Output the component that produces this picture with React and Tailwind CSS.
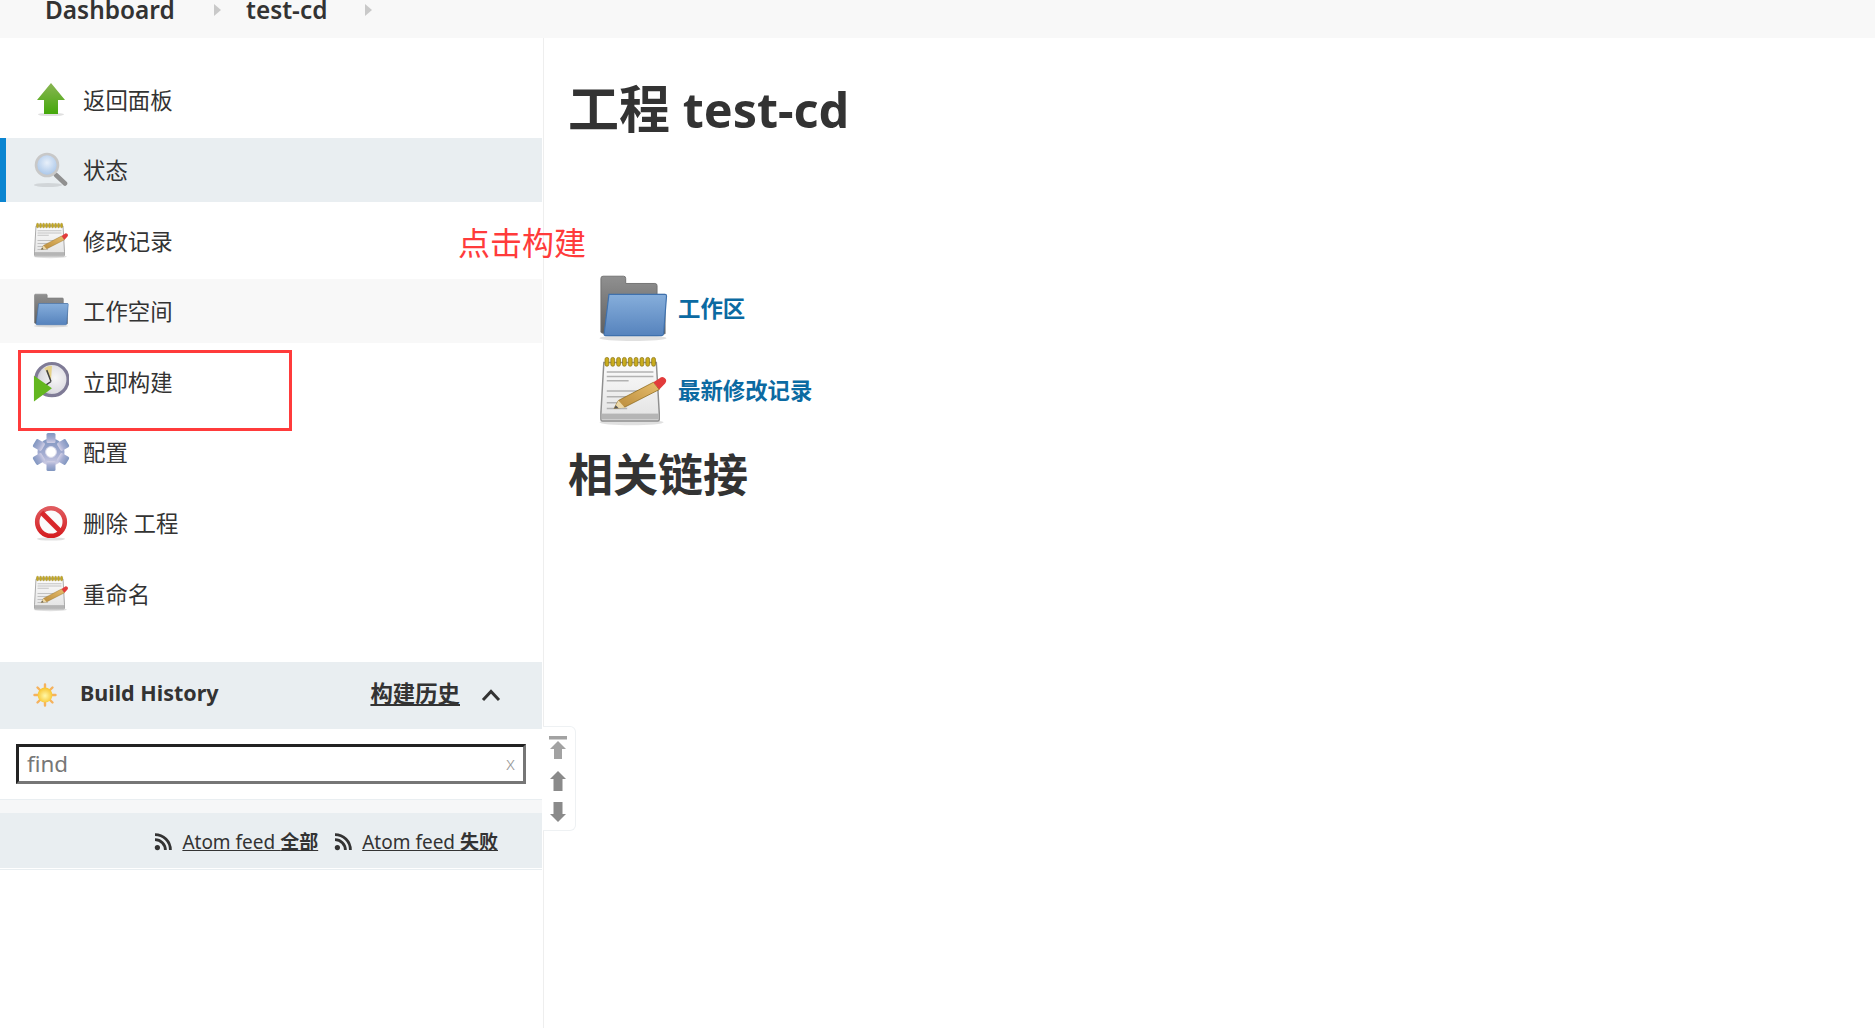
import React from "react";

const Notepad = ({ className, id = "a" }) => (
  <svg viewBox="0 0 48 48" className={className}>
    <defs>
      <linearGradient id={`padg${id}`} x1="0" y1="0" x2="0" y2="1"><stop offset="0" stopColor="#fbfbfb" /><stop offset="1" stopColor="#e2e2e2" /></linearGradient>
      <linearGradient id={`pencilg${id}`} x1="0" y1="1" x2="1" y2="0"><stop offset="0" stopColor="#b98a3a" /><stop offset="1" stopColor="#e6bd6c" /></linearGradient>
    </defs>
    <ellipse cx="23" cy="45.5" rx="22" ry="2" fill="#000" opacity="0.12" />
    <path d="M4 4.5h36l2 34.5v4.5a1 1 0 0 1-1 1H3a1 1 0 0 1-1-1V39z" fill={`url(#padg${id})`} stroke="#8f8f8f" strokeWidth="1" />
    <rect x="2.5" y="39.5" width="39" height="4" fill="#b5b5b5" />
    {[6, 10, 14, 18, 22, 26, 30, 34, 38].map((x) => (
      <rect key={x} x={x - 1.2} y="1" width="2.6" height="6" rx="1.2" fill="#c9ac1e" stroke="#8a7414" strokeWidth="0.5" />
    ))}
    <path d="M6 11h32M6 14h32M6 17h15M6 24h32M6 28h24M6 32h17M6 36h14" fill="none" stroke="#b2b2b2" strokeWidth="1" />
    <path d="M11 36l3-5.5 24-12.5 4 5-23.5 12z" fill={`url(#pencilg${id})`} stroke="#8a6414" strokeWidth="0.5" />
    <path d="M38 18l4-2.6a2.6 2.6 0 0 1 4 3.4l-4 4.2z" fill="#e23b3b" />
    <path d="M11 36l3-5.5 4.5 5z" fill="#ecd8a8" />
    <path d="M11 36l1.2-2.2 2 2z" fill="#555" />
  </svg>
);

const Folder = ({ className, id = "a" }) => (
  <svg viewBox="0 0 48 48" className={className}>
    <defs>
      <linearGradient id={`foldb${id}`} x1="0" y1="0" x2="0" y2="1"><stop offset="0" stopColor="#86aedb" /><stop offset="1" stopColor="#5683bd" /></linearGradient>
      <linearGradient id={`foldg${id}`} x1="0" y1="0" x2="0" y2="1"><stop offset="0" stopColor="#909090" /><stop offset="1" stopColor="#5f5f5f" /></linearGradient>
    </defs>
    <ellipse cx="24" cy="44" rx="23" ry="2" fill="#000" opacity="0.12" />
    <path d="M2 3a1.5 1.5 0 0 1 1.5-1.5h14a1.5 1.5 0 0 1 1.5 1.5v3.5h20a1.5 1.5 0 0 1 1.5 1.5v6H46v27H4l-2-1z" fill={`url(#foldg${id})`} stroke="#6b6b6b" strokeWidth="0.6" />
    <path d="M7.5 14h38.5a1 1 0 0 1 1 1l-2 26a1.5 1.5 0 0 1-1.5 1.3H5.2a1 1 0 0 1-1-1.2z" fill={`url(#foldb${id})`} stroke="#3f71ad" strokeWidth="0.8" />
  </svg>
);

const UpArrow = ({ className }) => (
  <svg viewBox="0 0 36 36" className={className}>
    <defs><linearGradient id="upg" x1="0" y1="0" x2="0" y2="1"><stop offset="0" stopColor="#8ab554" /><stop offset="1" stopColor="#44a80a" /></linearGradient></defs>
    <ellipse cx="18" cy="33" rx="13" ry="1.6" fill="#000" opacity="0.12" />
    <path d="M18 1.5L32 18.5H25V32.5H11V18.5H4z" fill="url(#upg)" />
  </svg>
);

const Magnifier = ({ className }) => (
  <svg viewBox="0 0 36 36" className={className}>
    <defs><radialGradient id="mag" cx="0.5" cy="0.4" r="0.6"><stop offset="0" stopColor="#e8f0fa" /><stop offset="1" stopColor="#a6c4e8" /></radialGradient></defs>
    <ellipse cx="15" cy="33" rx="14" ry="2" fill="#000" opacity="0.1" />
    <path d="M23 23l9 8.5" stroke="#909090" strokeWidth="4.6" strokeLinecap="round" />
    <circle cx="14" cy="13" r="11" fill="url(#mag)" stroke="#c8c8c8" strokeWidth="2.6" />
  </svg>
);

const Clock = ({ className }) => (
  <svg viewBox="0 0 38 42" className={className}>
    <defs><radialGradient id="clk" cx="0.6" cy="0.45" r="0.65"><stop offset="0" stopColor="#f7f7f7" /><stop offset="0.7" stopColor="#dddce2" /><stop offset="1" stopColor="#a8a5b8" /></radialGradient></defs>
    <circle cx="20" cy="19" r="17" fill="url(#clk)" stroke="#7f7b96" strokeWidth="3.4" />
    <path d="M19 20L12 7a14 14 0 0 1 8-2.5z" fill="#e6d28a" />
    <path d="M19 21L14.5 9M19 21l-7 5" stroke="#444" strokeWidth="1.6" />
    <path d="M1 15L20 28 1 42z" fill="#63b71f" />
  </svg>
);

const Gear = ({ className }) => (
  <svg viewBox="0 0 38 40" className={className}>
    <defs><linearGradient id="gearg" x1="0" y1="0" x2="0" y2="1"><stop offset="0" stopColor="#8096c0" /><stop offset="0.6" stopColor="#a6aed2" /><stop offset="1" stopColor="#d2d0e6" /></linearGradient></defs>
    <g fill="url(#gearg)">
      <circle cx="19" cy="20" r="13.5" />
      {[0, 60, 120, 180, 240, 300].map((a) => (
        <rect key={a} x="14.5" y="1" width="9" height="10" rx="1.5" transform={`rotate(${a} 19 20)`} />
      ))}
    </g>
    <circle cx="19" cy="20" r="5.4" fill="#fff" stroke="#dcdcec" strokeWidth="1" />
  </svg>
);

const Stop = ({ className }) => (
  <svg viewBox="0 0 36 36" className={className}>
    <defs><linearGradient id="stopg" x1="0" y1="0" x2="0" y2="1"><stop offset="0" stopColor="#e05a5e" /><stop offset="1" stopColor="#d51f22" /></linearGradient></defs>
    <ellipse cx="18" cy="34" rx="14" ry="1.6" fill="#000" opacity="0.12" />
    <circle cx="18" cy="17" r="13.8" fill="#fbfbfb" stroke="url(#stopg)" strokeWidth="4.6" />
    <path d="M8.5 7.5l19 19" stroke="#d8262a" strokeWidth="5" />
  </svg>
);

const Sun = ({ className }) => (
  <svg viewBox="0 0 24 24" className={className}>
    <defs><radialGradient id="sun" cx="0.5" cy="0.55" r="0.5"><stop offset="0" stopColor="#fff8a8" /><stop offset="1" stopColor="#f8c838" /></radialGradient></defs>
    <g stroke="#f6b25c" strokeWidth="2.4" strokeLinecap="round">
      <path d="M12 1.5v4M12 18.5v4M1.5 12h4M18.5 12h4M4.5 4.5l3 3M16.5 16.5l3 3M19.5 4.5l-3 3M7.5 16.5l-3 3" />
    </g>
    <circle cx="12" cy="12" r="7.4" fill="url(#sun)" />
  </svg>
);

const Rss = ({ className }) => (
  <svg viewBox="0 0 18 18" className={className}>
    <circle cx="3.4" cy="14.6" r="2.6" fill="#333" />
    <path d="M1 6.6a10.4 10.4 0 0 1 10.4 10.4M1 1.6a15.4 15.4 0 0 1 15.4 15.4" fill="none" stroke="#333" strokeWidth="2.8" />
  </svg>
);

const ScrollTop = () => (
  <svg viewBox="0 0 18 24" className="w-[18px] h-[24px] block">
    <rect x="0" y="0" width="18" height="3.5" fill="#a2a2a2" />
    <path d="M9 5l8 8h-4v10H5V13H1z" fill="#a2a2a2" />
  </svg>
);
const ScrollUp = () => (
  <svg viewBox="0 0 18 20" className="w-[18px] h-[20px] block">
    <path d="M9 0l8 8h-3.5v12h-9V8H1z" fill="#8a8a8a" />
  </svg>
);
const ScrollDown = () => (
  <svg viewBox="0 0 18 20" className="w-[18px] h-[20px] block">
    <path d="M9 20l8-8h-3.5V0h-9v12H1z" fill="#8a8a8a" />
  </svg>
);

const items = [
  { t: "返回面板", I: UpArrow, c: "w-[36px] h-[37px]", b: "" },
  { t: "状态", I: Magnifier, c: "w-[36px] h-[36px]", b: "bg-[#e9eef1]", active: true },
  { t: "修改记录", I: Notepad, id: "s1", c: "w-[36px] h-[37px]", b: "" },
  { t: "工作空间", I: Folder, id: "s2", c: "w-[36px] h-[36px]", b: "bg-[#f8f8f8]" },
  { t: "立即构建", I: Clock, c: "w-[36px] h-[41px]", b: "" },
  { t: "配置", I: Gear, c: "w-[38px] h-[40px]", b: "" },
  { t: "删除 工程", I: Stop, c: "w-[36px] h-[36px]", b: "" },
  { t: "重命名", I: Notepad, id: "s3", c: "w-[36px] h-[37px]", b: "" },
];

const font = "font-['Noto_Sans','Noto_Sans_CJK_SC',sans-serif]";

export default function App() {
  return (
    <div className={`relative h-screen w-full overflow-hidden bg-white text-[#333] ${font}`}>
      <header className="h-[38px] bg-[#f8f8f8] overflow-hidden flex items-start pl-[45px]">
        <div className="flex items-center -mt-[7px] h-[34px] font-semibold text-[24.4px] leading-[34px]">
          <span className="w-[130px]">Dashboard</span>
          <span className="ml-[39px] w-0 h-0 border-y-[6px] border-y-transparent border-l-[7px] border-l-[#c9c9c9]" />
          <span className="ml-[25px] w-[82px]">test-cd</span>
          <span className="ml-[37px] w-0 h-0 border-y-[6px] border-y-transparent border-l-[7px] border-l-[#c9c9c9]" />
        </div>
      </header>
      <div className="flex h-[990px]">
        <aside className="w-[544px] shrink-0 border-r border-[#eeeeee] pr-px">
          <nav className="pt-[29.5px] flex flex-col gap-[6.6px]">
            {items.map(({ t, I, c, b, active, id }) => (
              <div key={t} className={`h-[64px] flex items-center relative ${b} ${active ? "border-l-[6px] border-[#0b85d1]" : ""}`}>
                <div className={`${active ? "ml-[27px]" : "ml-[33px]"} w-[36px] mr-[14px] flex justify-center blur-[0.4px]`}>
                  <I id={id} className={`${c} shrink-0 block`} />
                </div>
                <span className="text-[22.4px] leading-[30px] font-normal pt-[2px]">{t}</span>
              </div>
            ))}
          </nav>
          <section className="mt-[36.3px]">
            <div className="h-[67px] bg-[#e9eef1] flex items-center pl-[33px] pr-[41px]">
              <Sun className="w-[24px] h-[24px] blur-[0.4px]" />
              <span className="ml-[23px] text-[21.5px] font-bold -mt-[4px]">Build History</span>
              <span className="ml-auto text-[22.4px] font-semibold underline -mt-[3px]">构建历史</span>
              <svg viewBox="0 0 20 14" className="w-[20px] h-[14px] ml-[21px]">
                <path d="M2 12l8-8.5 8 8.5" fill="none" stroke="#333" strokeWidth="3" />
              </svg>
            </div>
            <div className="h-[71px] pl-[16px] pr-[16px] pt-[15px] border-b border-[#e9eef1]">
              <div className="h-[40px] w-[510px] border-[3px] border-t-[#222] border-l-[#222] border-r-[#767676] border-b-[#767676] flex items-center px-[8px]">
                <span className="text-[22.4px] text-[#777] font-normal">find</span>
                <span className="ml-auto text-[18px] text-[#999] font-light">x</span>
              </div>
            </div>
            <div className="h-[13px] bg-[#f6f7f8]" />
            <div className="h-[55px] bg-[#e9eef1] flex items-center justify-end pr-[44px] text-[19px]">
              <Rss className="w-[18px] h-[18px] mr-[10px] mt-[3px]" />
              <span className="underline pt-[3px]">Atom feed <b className="font-semibold">全部</b></span>
              <Rss className="w-[18px] h-[18px] ml-[16px] mr-[10px] mt-[3px]" />
              <span className="underline pt-[3px]">Atom feed <b className="font-semibold">失败</b></span>
            </div>
            <div className="h-px bg-[#e9eef1] mt-px" />
          </section>
        </aside>
        <main className="flex-1 pl-[24px] pt-[32px]">
          <h1 className="text-[48.5px] leading-[76px] font-bold h-[76px]"><span className="text-[51px]">工程</span> test-cd</h1>
          <div className="mt-[130px] pl-[31px] flex flex-col">
            <div className="flex items-center h-[66px] gap-[10px]">
              <Folder id="m1" className="w-[70px] h-[70px] shrink-0 -ml-[1px] blur-[0.4px]" />
              <a className="text-[22.4px] font-bold text-[#0b6aa2]">工作区</a>
            </div>
            <div className="flex items-center h-[84px] mt-[7px] gap-[10px]">
              <Notepad id="m2" className="w-[70px] h-[72px] shrink-0 -ml-[1px] blur-[0.4px]" />
              <a className="text-[22.4px] font-bold text-[#0b6aa2]">最新修改记录</a>
            </div>
          </div>
          <h2 className="text-[45px] leading-[60px] font-bold mt-[12px]">相关链接</h2>
        </main>
      </div>

      <div className="absolute left-[543px] top-[726px] w-[33px] h-[105px] bg-white border border-l-0 border-[#eef1f3] rounded-r-[6px] flex flex-col items-center pt-[9px] gap-[11px] pr-[3px] blur-[0.3px]">
        <ScrollTop />
        <ScrollUp />
        <ScrollDown />
      </div>
      <div className="absolute left-[18px] top-[350px] w-[274px] h-[81px] border-[3px] border-[#ff3b3b]" />
      <div className="absolute left-[458px] top-[219px] text-[32px] leading-[44px] text-[#ff3b3b] font-['Noto_Sans_CJK_SC',sans-serif] font-normal">点击构建</div>
    </div>
  );
}
